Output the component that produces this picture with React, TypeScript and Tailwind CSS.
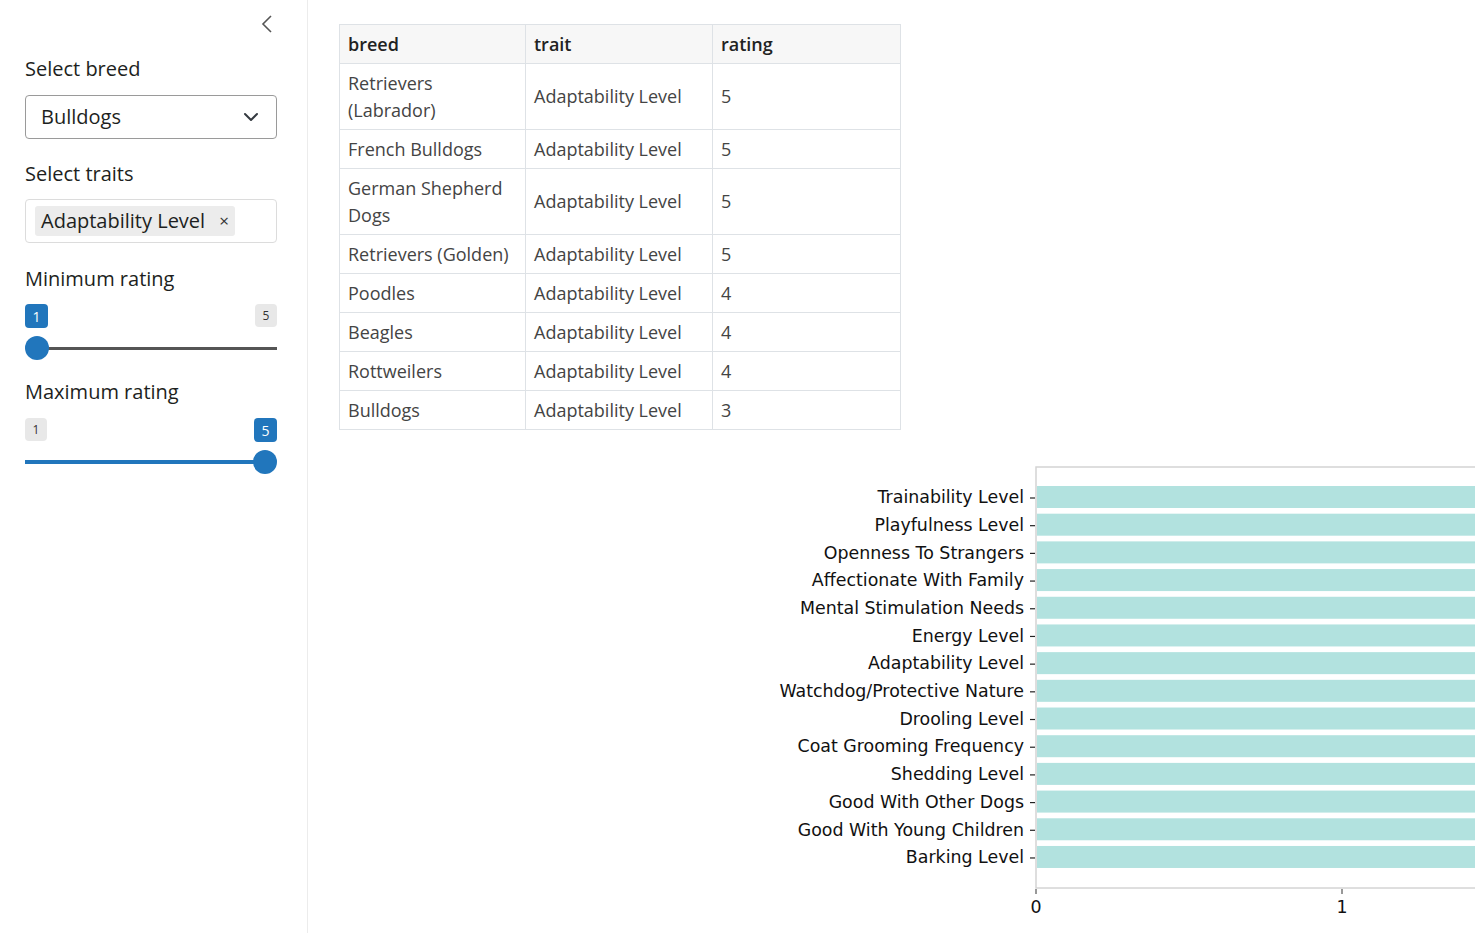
import type { ReactNode } from "react";

const rows: { breed: string; trait: string; rating: number }[] = [
  { breed: "Retrievers (Labrador)", trait: "Adaptability Level", rating: 5 },
  { breed: "French Bulldogs", trait: "Adaptability Level", rating: 5 },
  { breed: "German Shepherd Dogs", trait: "Adaptability Level", rating: 5 },
  { breed: "Retrievers (Golden)", trait: "Adaptability Level", rating: 5 },
  { breed: "Poodles", trait: "Adaptability Level", rating: 4 },
  { breed: "Beagles", trait: "Adaptability Level", rating: 4 },
  { breed: "Rottweilers", trait: "Adaptability Level", rating: 4 },
  { breed: "Bulldogs", trait: "Adaptability Level", rating: 3 },
];

const traits = [
  "Trainability Level",
  "Playfulness Level",
  "Openness To Strangers",
  "Affectionate With Family",
  "Mental Stimulation Needs",
  "Energy Level",
  "Adaptability Level",
  "Watchdog/Protective Nature",
  "Drooling Level",
  "Coat Grooming Frequency",
  "Shedding Level",
  "Good With Other Dogs",
  "Good With Young Children",
  "Barking Level",
];

function Label({ children }: { children: ReactNode }) {
  return <div className="text-[20px] leading-[30px] text-[#1d1f21]">{children}</div>;
}

function Slider({ value }: { value: "min" | "max" }) {
  const isMin = value === "min";
  const blue = "flex h-6 w-[23px] items-center justify-center rounded-[4px] bg-[#2176bc] text-[14px] text-white";
  const gray = "flex h-[23px] w-[22px] items-center justify-center rounded-[4px] bg-[#e8e8e8] text-[12px] text-[#333]";
  return (
    <div>
      <div className="flex items-start justify-between">
        <div className={isMin ? blue : gray}>1</div>
        <div className={isMin ? gray : blue}>5</div>
      </div>
      <div className="relative mt-2 h-6">
        <div
          className={
            isMin
              ? "absolute left-3 right-0 top-[11px] h-[3px] bg-[#555]"
              : "absolute left-0 right-3 top-[10px] h-1 bg-[#2176bc]"
          }
        />
        <div
          className={
            isMin
              ? "absolute left-0 top-0 h-6 w-6 rounded-full bg-[#2176bc]"
              : "absolute right-0 top-0 h-6 w-6 rounded-full bg-[#2176bc]"
          }
        />
      </div>
    </div>
  );
}

function Sidebar() {
  return (
    <aside className="w-[308px] shrink-0 border-r border-[#ececec] pl-[25px] pr-[30px]">
      <div className="flex h-[48px] items-center justify-end pr-[4px]">
        <svg width="12" height="18" viewBox="0 0 12 18" fill="none" stroke="#555" strokeWidth="1.6">
          <path d="M10 1 L2 9 L10 17" />
        </svg>
      </div>
      <div className="mt-[6px]">
        <Label>Select breed</Label>
      </div>
      <div className="mt-[11px] flex h-[44px] items-center justify-between rounded-[4px] border border-[#9a9a9a] pl-[15px] pr-[17px] text-[20px] text-[#1d1f21]">
        <span>Bulldogs</span>
        <svg width="16" height="16" viewBox="0 0 16 16" fill="none" stroke="#343a40" strokeWidth="2" strokeLinecap="round" strokeLinejoin="round">
          <path d="m2 5 6 6 6-6" />
        </svg>
      </div>
      <div className="mt-[20px]">
        <Label>Select traits</Label>
      </div>
      <div className="mt-[10px] flex h-[44px] items-center rounded-[4px] border border-[#dcdcdc] px-[9px]">
        <div className="flex h-[30px] w-[200px] items-center justify-between rounded-[3px] bg-[#ececec] pl-[6px] pr-[6px] text-[20px] text-[#1d1f21]">
          <span>Adaptability Level</span>
          <span className="text-[17px] text-[#333]">×</span>
        </div>
      </div>
      <div className="mt-[21px]">
        <Label>Minimum rating</Label>
      </div>
      <div className="mt-[10px]">
        <Slider value="min" />
      </div>
      <div className="mt-[17px]">
        <Label>Maximum rating</Label>
      </div>
      <div className="mt-[11px]">
        <Slider value="max" />
      </div>
    </aside>
  );
}

function DataTable() {
  const cell = "border border-[#dee2e6] px-[8px] py-[5.5px]";
  return (
    <table className="w-[562px] table-fixed border-collapse text-[18px] leading-[27px]">
      <thead>
        <tr className="bg-[#f7f7f7]">
          <th className={`w-[186px] ${cell} text-left font-semibold text-[#222]`}>breed</th>
          <th className={`w-[187px] ${cell} text-left font-semibold text-[#222]`}>trait</th>
          <th className={`${cell} text-left font-semibold text-[#222]`}>rating</th>
        </tr>
      </thead>
      <tbody className="text-[#444]">
        {rows.map((r) => (
          <tr key={r.breed}>
            <td className={cell}>{r.breed}</td>
            <td className={cell}>{r.trait}</td>
            <td className={cell}>{r.rating}</td>
          </tr>
        ))}
      </tbody>
    </table>
  );
}

function TraitChart() {
  const left = 697;
  const top = 27;
  const bottom = 448;
  const unit = 306;
  return (
    <svg width="1136" height="493" className="mt-[10px] block" style={{ fontFamily: '"DejaVu Sans", sans-serif' }}>
      <rect x={left} y={top} width={1136 - left + 2} height={bottom - top} fill="none" stroke="#d4d4d4" strokeWidth="1.5" />
      {traits.map((t, i) => {
        const cy = 57 + i * 27.69;
        return (
          <g key={t}>
            <rect x={left + 1} y={cy - 11} width={1136 - left} height={22} fill="#b2e2df" />
            <line x1={left - 6} x2={left - 1} y1={cy + 1} y2={cy + 1} stroke="#222" strokeWidth="1.2" />
            <text x={left - 12} y={cy} dy="0.36em" textAnchor="end" fontSize="17.4" fill="#111">
              {t}
            </text>
          </g>
        );
      })}
      {[0, 1].map((v) => (
        <g key={v}>
          <line x1={left + v * unit} x2={left + v * unit} y1={bottom + 1} y2={bottom + 6} stroke="#333" strokeWidth="1" />
          <text x={left + v * unit} y={467} dy="0.36em" textAnchor="middle" fontSize="17.4" fill="#111">
            {v}
          </text>
        </g>
      ))}
    </svg>
  );
}

export default function App() {
  return (
    <div className="flex h-[933px] w-[1475px] overflow-hidden bg-white" style={{ fontFamily: '"Open Sans", "Noto Sans", sans-serif' }}>
      <Sidebar />
      <main className="min-w-0 flex-1 overflow-hidden pl-[31px] pt-[24px]">
        <DataTable />
        <TraitChart />
      </main>
    </div>
  );
}
